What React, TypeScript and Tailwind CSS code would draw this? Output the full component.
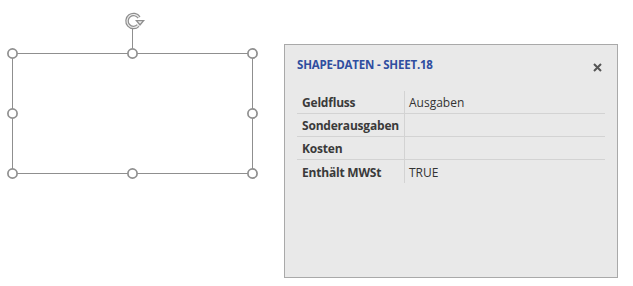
import React from 'react';

const rows = [
  { label: 'Geldfluss', value: 'Ausgaben' },
  { label: 'Sonderausgaben', value: '' },
  { label: 'Kosten', value: '' },
  { label: 'Enthält MWSt', value: 'TRUE' },
];

// handle positions on the selected shape
const handles = [
  [12.5, 53.5], [132.5, 53.5], [252.5, 53.5],
  [12.5, 113.5], [252.5, 113.5],
  [12.5, 173.5], [132.5, 173.5], [252.5, 173.5],
];

function SelectedShape() {
  return (
    <svg width="284" height="286" className="shrink-0">
      <rect x="12.5" y="53.5" width="240" height="120" fill="none" stroke="#8f8f8f" strokeWidth="1" />
      <line x1="132.5" y1="29" x2="132.5" y2="48" stroke="#8f8f8f" strokeWidth="1" />
      {/* rotate handle */}
      <g fill="none" stroke="#8f8f8f">
        <path d="M139 17.5 A6.5 6.5 0 1 0 138.2 25.5" strokeWidth="3.6" />
        <path d="M139 17.5 A6.5 6.5 0 1 0 138.2 25.5" stroke="#ececec" strokeWidth="1.2" />
        <path d="M135 20 L145 20 L140 26 Z" fill="#8f8f8f" stroke="none" />
        <path d="M137.8 21.2 L142.2 21.2 L140 23.8 Z" fill="#ececec" stroke="none" />
      </g>
      {handles.map(([x, y]) => (
        <circle key={`${x}-${y}`} cx={x} cy={y} r="4.6" fill="white" stroke="#8f8f8f" strokeWidth="1.7" />
      ))}
    </svg>
  );
}

export default function App() {
  return (
    <div className="w-[633px] h-[286px] bg-white flex" style={{ fontFamily: '"Open Sans", "Noto Sans", sans-serif' }}>
      <SelectedShape />
      <div className="mt-[44px] w-[334px] h-[234px] border border-[#a9a9a9] bg-[#e9e9e9] px-3 flex flex-col">
        <div className="flex items-center justify-between h-[40px]">
          <span className="text-[11.5px] font-bold text-[#2f4ea0] tracking-[-0.2px]">SHAPE-DATEN - SHEET.18</span>
          <svg width="9" height="9" viewBox="0 0 9 9" className="mr-[3px] mt-[5px]">
            <path d="M1 1 L8 8 M8 1 L1 8" stroke="#555" strokeWidth="2" />
          </svg>
        </div>
        <div className="mt-[6px]">
          {rows.map((r, i) => (
            <div
              key={r.label}
              className={`flex h-[23px] items-center text-[12px] text-[#333] ${i < rows.length - 1 ? 'border-b border-[#d3d3d3]' : ''}`}
            >
              <div className="w-[108px] pl-[5px] pt-[2px] font-bold text-[#3a3a3a] tracking-[-0.2px] h-full flex items-center border-r border-[#d3d3d3]">
                {r.label}
              </div>
              <div className="pl-[4px] pt-[2px]">{r.value}</div>
            </div>
          ))}
        </div>
      </div>
    </div>
  );
}
